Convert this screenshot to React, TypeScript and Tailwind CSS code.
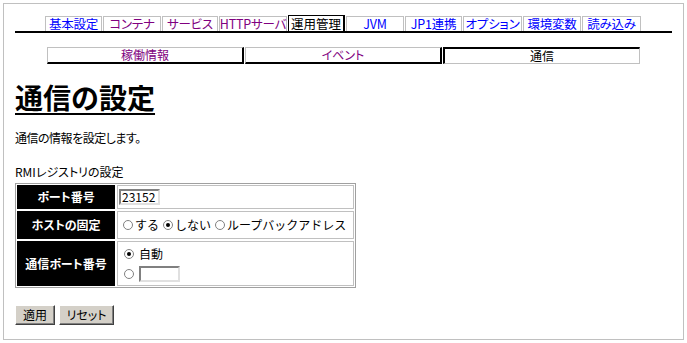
import type { ReactNode } from "react";

interface Tab {
  label: string;
  width: string;
  tone: "blue" | "purple" | "active";
}

const tabs: Tab[] = [
  { label: "基本設定", width: "w-[57px]", tone: "blue" },
  { label: "コンテナ", width: "w-[58px]", tone: "purple" },
  { label: "サービス", width: "w-[56px]", tone: "purple" },
  { label: "HTTPサーバ", width: "w-[68px]", tone: "purple" },
  { label: "運用管理", width: "w-[57px]", tone: "active" },
  { label: "JVM", width: "w-[58px]", tone: "blue" },
  { label: "JP1連携", width: "w-[57px]", tone: "blue" },
  { label: "オプション", width: "w-[59px]", tone: "blue" },
  { label: "環境変数", width: "w-[58px]", tone: "blue" },
  { label: "読み込み", width: "w-[59px]", tone: "blue" },
];

const subTabs = [
  { label: "稼働情報", active: false },
  { label: "イベント", active: false },
  { label: "通信", active: true },
];

function TopTab({ tab }: { tab: Tab }) {
  if (tab.tone === "active") {
    return (
      <div
        className={`${tab.width} h-[16px] whitespace-nowrap border-l border-t border-r-2 border-black text-center text-[12.5px] leading-[15px] text-black`}
      >
        {tab.label}
      </div>
    );
  }
  return (
    <div
      className={[
        tab.width,
        "flex h-[15px] justify-center whitespace-nowrap border-x border-t border-[#c0c0c0] text-[12.5px] leading-[14px] tracking-[-0.2px]",
        tab.tone === "blue" ? "text-[#0000ff]" : "text-[#800080]",
      ].join(" ")}
    >
      {tab.label}
    </div>
  );
}

function Radio({ checked = false }: { checked?: boolean }) {
  return (
    <svg width="10" height="10" viewBox="0 0 10 10" aria-hidden="true" className="shrink-0">
      <circle cx="5" cy="5" r="4.5" fill="#fff" stroke="#808080" />
      {checked ? <circle cx="5" cy="5" r="2" fill="#000" /> : null}
    </svg>
  );
}

function Label({ children }: { children: ReactNode }) {
  return (
    <div className="flex items-center justify-center bg-black text-[12px] font-bold text-white">
      {children}
    </div>
  );
}

function TextBox({ value = "", width }: { value?: string; width: string }) {
  return (
    <div
      className={`${width} h-[16px] border-2 border-t-[#808080] border-l-[#808080] border-b-[#e0e0e0] border-r-[#e0e0e0] bg-white pl-[1px] text-[12px] leading-[12px] text-black`}
    >
      {value}
    </div>
  );
}

export default function App() {
  return (
    <div className="h-[343px] w-[687px] bg-white font-['Noto_Sans_CJK_JP',sans-serif] text-black [font-feature-settings:'palt']">
      <div className="m-[3px] h-[337px] border border-[#c0c0c0] px-[11px] pt-[11px]">
        <div className="flex items-end gap-[1px] border-b-2 border-black pl-[30px]">
          {tabs.map((tab) => (
            <TopTab key={tab.label} tab={tab} />
          ))}
        </div>

        <div className="mt-[14px] flex gap-[1px] pl-[32px]">
          {subTabs.map((tab) => (
            <div
              key={tab.label}
              className={
                tab.active
                  ? "h-[17px] w-[197px] border-l-2 border-t-2 border-b border-r border-l-black border-t-black border-b-[#c0c0c0] border-r-[#c0c0c0] text-center text-[12px] leading-[14px] text-black"
                  : "h-[17px] w-[197px] border-l border-t border-b-2 border-r-2 border-l-[#c0c0c0] border-t-[#c0c0c0] border-b-black border-r-black text-center text-[12px] leading-[14px] text-[#800080]"
              }
            >
              {tab.label}
            </div>
          ))}
        </div>

        <h1 className="mt-[17px] text-[28px] font-bold leading-[32px] underline decoration-2 underline-offset-[4px] [font-feature-settings:normal]">
          通信の設定
        </h1>

        <p className="mt-[17px] text-[12px] leading-[16px] tracking-[-0.5px]">通信の情報を設定します。</p>

        <p className="mt-[18px] text-[12px] leading-[16px]">RMIレジストリの設定</p>

        <div className="mt-[3px] grid w-fit grid-cols-[98px_237px] grid-rows-[24px_28px_45px] gap-[2px] border border-[#a0a0a0] p-[1px]">
          <Label>ポート番号</Label>
          <div className="flex items-center border border-[#c0c0c0] bg-white pl-[1px]">
            <TextBox value="23152" width="w-[41px]" />
          </div>

          <Label>ホストの固定</Label>
          <div className="flex items-center border border-[#c0c0c0] bg-white pl-[5px] text-[12px] [font-feature-settings:normal]">
            <Radio />
            <span className="ml-[2px] mr-[4px]">する</span>
            <Radio checked />
            <span className="ml-[2px] mr-[4px]">しない</span>
            <Radio />
            <span className="ml-[2px]">ループバックアドレス</span>
          </div>

          <Label>通信ポート番号</Label>
          <div className="flex flex-col justify-center gap-[3px] border border-[#c0c0c0] bg-white pl-[6px] text-[12px] [font-feature-settings:normal]">
            <div className="flex items-center">
              <Radio checked />
              <span className="ml-[5px]">自動</span>
            </div>
            <div className="flex items-center">
              <Radio />
              <span className="ml-[5px]">
                <TextBox width="w-[41px]" />
              </span>
            </div>
          </div>
        </div>

        <div className="mt-[17px] flex gap-[4px]">
          <button
            type="button"
            className="h-[20px] w-[40px] border border-t-white border-l-white border-b-[#404040] border-r-[#404040] bg-[#d4d0c8] text-[12px] leading-none shadow-[inset_-1px_-1px_0_#808080]"
          >
            適用
          </button>
          <button
            type="button"
            className="h-[20px] w-[55px] border border-t-white border-l-white border-b-[#404040] border-r-[#404040] bg-[#d4d0c8] text-[12px] leading-none shadow-[inset_-1px_-1px_0_#808080]"
          >
            リセット
          </button>
        </div>
      </div>
    </div>
  );
}
